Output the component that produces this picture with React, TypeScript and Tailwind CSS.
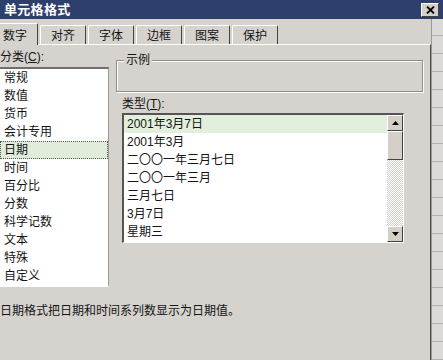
import React from 'react';

const tabs = ['对齐', '字体', '边框', '图案', '保护'];

const categories = [
  '常规',
  '数值',
  '货币',
  '会计专用',
  '日期',
  '时间',
  '百分比',
  '分数',
  '科学记数',
  '文本',
  '特殊',
  '自定义',
];

const types = [
  '2001年3月7日',
  '2001年3月',
  '二〇〇一年三月七日',
  '二〇〇一年三月',
  '三月七日',
  '3月7日',
  '星期三',
];

const ScrollButton: React.FC<{ down?: boolean }> = ({ down }) => (
  <div className="h-[16px] w-[16px] shrink-0 bg-[#d4d0c8] border border-t-white border-l-white border-r-[#404040] border-b-[#404040] flex items-center justify-center">
    <svg width="7" height="4" viewBox="0 0 7 4">
      {down ? <path d="M0 0h7L3.5 4z" fill="#000" /> : <path d="M0 4h7L3.5 0z" fill="#000" />}
    </svg>
  </div>
);

const App: React.FC = () => {
  return (
    <div className="w-[443px] h-[360px] overflow-hidden bg-[#d6d3ce] flex flex-col font-['Liberation_Sans','Noto_Sans_CJK_SC',sans-serif] text-[12px] text-[#141414]">
      {/* Title bar */}
      <div className="h-[19px] shrink-0 bg-[#2e3e6d] flex items-center justify-between pl-[4px] pr-[4px]">
        <span className="text-white font-bold text-[13px] leading-[19px] tracking-[0.3px]">单元格格式</span>
        <div className="w-[18px] h-[14px] bg-[#d4d0c8] border border-t-white border-l-white border-r-[#404040] border-b-[#404040] flex items-center justify-center">
          <svg width="9" height="8" viewBox="0 0 9 8">
            <path d="M1 0.5l7 7M8 0.5l-7 7" stroke="#000" strokeWidth="1.8" />
          </svg>
        </div>
      </div>

      <div className="flex flex-1 min-h-0">
        <div className="w-[431px] flex flex-col">
          {/* Tabs */}
          <div className="h-[25px] shrink-0 flex items-end gap-[2px]">
            <div className="relative z-10 -mb-px h-[22px] w-[38px] bg-[#d6d3ce] border-t border-t-white border-r border-r-[#404040] rounded-tr-[2px] pl-[3px] pt-[5px] leading-[14px]">
              数字
            </div>
            {tabs.map((t) => (
              <div
                key={t}
                className="h-[19px] w-[46px] border-t border-l border-t-white border-l-white border-r border-r-[#404040] rounded-t-[2px] text-center pt-[3px] leading-[14px]"
              >
                {t}
              </div>
            ))}
          </div>

          {/* Panel */}
          <div className="flex-1 border-t border-t-white border-r border-r-[#4a4a4a]">
            <div className="flex">
              {/* Category column */}
              <div className="w-[109px] shrink-0 pt-[5px]">
                <div className="h-[14px] leading-[14px]">
                  分类(<span className="underline">C</span>):
                </div>
                <div className="mt-[3px] bg-white border-t-2 border-t-[#6f6f6f] border-r border-r-[#9a9a9a] border-b-2 border-b-white">
                  {categories.map((c) => (
                    <div
                      key={c}
                      className={
                        c === '日期'
                          ? 'h-[18px] leading-[18px] pl-[4px] bg-[#dfecda] outline-1 outline-dotted outline-[#555] -outline-offset-1'
                          : 'h-[18px] leading-[18px] pl-[4px]'
                      }
                    >
                      {c}
                    </div>
                  ))}
                </div>
              </div>

              {/* Right column */}
              <div className="flex-1 ml-[7px] pr-[7px]">
                <div className="relative mt-[15px] h-[32px] border border-[#8e8c88] shadow-[inset_1px_1px_0_#ffffff,1px_1px_0_#ffffff]">
                  <span className="absolute -top-[8px] left-[7px] px-[2px] bg-[#d6d3ce] leading-[14px]">示例</span>
                </div>

                <div className="mt-[5px] pl-[6px] h-[14px] leading-[14px]">
                  类型(<span className="underline">T</span>):
                </div>
                <div className="mt-[2px] ml-[6px] w-[282px] h-[130px] flex bg-white border-t-2 border-l-2 border-t-[#555] border-l-[#555] border-r border-b border-r-white border-b-white">
                  <div className="flex-1">
                    {types.map((t, i) => (
                      <div
                        key={t}
                        className={
                          i === 0
                            ? 'h-[18px] leading-[18px] pl-[3px] bg-[#e2efdc]'
                            : 'h-[18px] leading-[18px] pl-[3px]'
                        }
                      >
                        {t}
                      </div>
                    ))}
                  </div>
                  <div className="w-[16px] flex flex-col">
                    <ScrollButton />
                    <div className="h-[29px] bg-[#d4d0c8] border border-t-white border-l-white border-r-[#404040] border-b-[#404040]" />
                    <div className="flex-1 bg-[image:repeating-conic-gradient(#ffffff_0%_25%,#d4d0c8_0%_50%)] bg-[length:2px_2px]" />
                    <ScrollButton down />
                  </div>
                </div>
              </div>
            </div>

            <div className="mt-[17px] leading-[14px]">日期格式把日期和时间系列数显示为日期值。</div>
          </div>
        </div>

        {/* Spreadsheet behind the dialog */}
        <div className="flex-1 flex flex-col bg-[#dcdad6] border-l border-l-[#9c9a96]">
          <div className="h-[17px] shrink-0 border-b border-b-[#b3b1ad]" />
          {Array.from({ length: 18 }).map((_, i) => (
            <div key={i} className="h-[18px] shrink-0 border-b border-b-[#b3b1ad]" />
          ))}
        </div>
      </div>
    </div>
  );
};

export default App;
